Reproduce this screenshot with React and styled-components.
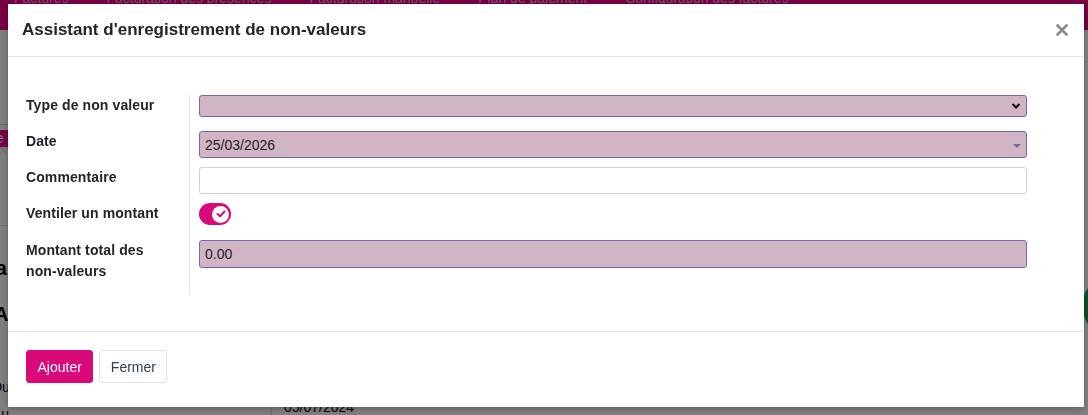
import React from "react";
import styled, { createGlobalStyle } from "styled-components";

const GlobalStyle = createGlobalStyle`
    html, body {
        margin: 0;
        padding: 0;
        overflow: hidden;
    }
    body {
        font-family: "Liberation Sans", Arial, sans-serif;
        color: #222;
    }
`;

//page behind the dialog
const Page = styled.div`
    width: 100vw;
    height: 100vh;
    overflow: hidden;
    background: #ffffff;
    display: flex;
    flex-direction: column;
`;

const Navbar = styled.div`
    height: 30px;
    flex-shrink: 0;
    background: #f0008a;
    display: flex;
    align-items: flex-start;
    gap: 38px;
    padding-left: 14px;
    overflow: hidden;
`;

const NavItem = styled.span`
    font-size: 14px;
    line-height: 14px;
    margin-top: -9px;
    color: rgba(255, 255, 255, 0.62);
    white-space: nowrap;
`;

const Content = styled.div`
    flex: 1;
    display: flex;
`;

const LeftPane = styled.div`
    width: 271px;
    border-right: 1px solid #d0d0d0;
    display: flex;
    flex-direction: column;
    overflow: hidden;
`;

const ControlBar = styled.div`
    height: 94px;
    border-bottom: 1px solid #c8c8c8;
`;

const PinkChip = styled.span`
    align-self: flex-start;
    margin-top: 5px;
    margin-left: -44px;
    height: 17px;
    line-height: 17px;
    padding-right: 40px;
    font-size: 14px;
    background: #f0008a;
    color: #fff;
`;

const Hatch = styled.div`
    height: 7px;
    background: repeating-linear-gradient(45deg, #e4e4e4 0 2px, #f6f6f6 2px 4px);
`;

const PaneLine = styled.div`
    margin-top: 71px;
    border-top: 1px solid #d8d8d8;
`;

const PaneHeading = styled.div`
    align-self: flex-start;
    margin-top: ${(p) => p.$top}px;
    margin-left: ${(p) => p.$shift}px;
    font-size: 20px;
    font-weight: bold;
    line-height: 20px;
    color: #000;
    white-space: nowrap;
`;

const PaneRow = styled.div`
    margin-top: ${(p) => p.$top}px;
    margin-left: -8px;
    font-size: 14px;
    line-height: 14px;
    color: #000;
`;

const RightPane = styled.div`
    flex: 1;
    padding: 369px 0 0 12px;
    font-size: 14px;
    color: #000;
`;

const ChatBubble = styled.div`
    position: fixed;
    right: -54px;
    top: 276px;
    width: 60px;
    height: 60px;
    border-radius: 50%;
    background: #1c9e40;
`;

const Backdrop = styled.div`
    position: fixed;
    inset: 0;
    background: rgba(0, 0, 0, 0.5);
`;

//dialog
const Modal = styled.div`
    position: fixed;
    left: 8px;
    top: 4px;
    width: 1076px;
    background: #ffffff;
    display: flex;
    flex-direction: column;
    box-shadow: 0 2px 6px rgba(0, 0, 0, 0.25);
`;

const Header = styled.div`
    height: 52px;
    padding: 0 16px 0 14px;
    display: flex;
    align-items: center;
    justify-content: space-between;
    border-bottom: 1px solid #dee2e6;
`;

const Title = styled.h4`
    margin: 0;
    font-size: 17px;
    font-weight: bold;
    color: #212529;
`;

const CloseBtn = styled.button`
    border: none;
    background: transparent;
    padding: 0;
    width: 12px;
    height: 12px;
    display: flex;
    cursor: pointer;
`;

const Body = styled.div`
    padding: 38px 57px 38px 18px;
    border-bottom: 1px solid #dee2e6;
`;

const FormGrid = styled.div`
    display: grid;
    grid-template-columns: 164px 1fr;
`;

const Label = styled.label`
    height: ${(p) => p.$h}px;
    border-right: 1px solid #dee2e6;
    font-size: 14px;
    font-weight: bold;
    line-height: 21px;
    letter-spacing: 0.1px;
    color: #212529;
`;

const Field = styled.div`
    height: ${(p) => p.$h}px;
    padding-left: 9px;
`;

const Input = styled.div`
    position: relative;
    box-sizing: border-box;
    height: ${(p) => p.$h}px;
    padding: 0 5px;
    display: flex;
    align-items: center;
    font-size: 14px;
    color: #222;
    border-radius: 3px;
    border: 1px solid ${(p) => (p.$required ? "#7966a8" : "#d0d0d0")};
    background: ${(p) => (p.$required ? "#d1b5c5" : "#ffffff")};
`;

const Chevron = styled.svg`
    position: absolute;
    right: 5px;
    top: 50%;
    margin-top: -4px;
`;

const Caret = styled.span`
    position: absolute;
    right: 5px;
    top: 12px;
    border-left: 4px solid transparent;
    border-right: 4px solid transparent;
    border-top: 4px solid #7966a8;
`;

const Switch = styled.div`
    width: 32px;
    height: 22px;
    border-radius: 11px;
    background: #d9097a;
    display: flex;
    align-items: center;
    justify-content: flex-end;
    padding-right: 2px;
    box-sizing: border-box;
`;

const Knob = styled.span`
    width: 17px;
    height: 17px;
    border-radius: 50%;
    background: #ffffff;
    display: flex;
    align-items: center;
    justify-content: center;
`;

const Footer = styled.div`
    height: 75px;
    padding: 18px 18px 0;
    box-sizing: border-box;
    display: flex;
    align-items: flex-start;
    gap: 6px;
`;

const Button = styled.button`
    height: 33px;
    padding: 0 10.5px;
    font-family: "Liberation Sans", Arial, sans-serif;
    font-size: 14px;
    border-radius: 3px;
    cursor: pointer;
    border: 1px solid ${(p) => (p.$primary ? "#d9097a" : "#dee2e6")};
    background: ${(p) => (p.$primary ? "#d9097a" : "#ffffff")};
    color: ${(p) => (p.$primary ? "#ffffff" : "#2c3e50")};
`;

const menu = [
    "Factures",
    "Facturation des présences",
    "Facturation manuelle",
    "Plan de paiement",
    "Configuration des factures",
];

function App() {
    return (
        <>
            <GlobalStyle />
            <Page>
                <Navbar>
                    {menu.map((m) => (
                        <NavItem key={m}>{m}</NavItem>
                    ))}
                </Navbar>
                <Content>
                    <LeftPane>
                        <ControlBar />
                        <PinkChip>Facture</PinkChip>
                        <Hatch />
                        <PaneLine />
                        <PaneHeading $top={32} $shift={-52}>Échéa</PaneHeading>
                        <PaneHeading $top={26} $shift={-6}>A</PaneHeading>
                        <PaneRow $top={56}>Du</PaneRow>
                        <PaneRow $top={13}>Au</PaneRow>
                    </LeftPane>
                    <RightPane>05/07/2024</RightPane>
                </Content>
                <ChatBubble />
            </Page>
            <Backdrop />
            <Modal>
                <Header>
                    <Title>Assistant d'enregistrement de non-valeurs</Title>
                    <CloseBtn aria-label="Fermer">
                        <svg width="12" height="12" viewBox="0 0 12 12">
                            <path d="M1.5 1.5 L10.5 10.5 M10.5 1.5 L1.5 10.5" stroke="#8a8a8a" strokeWidth="2.6" strokeLinecap="round" />
                        </svg>
                    </CloseBtn>
                </Header>
                <Body>
                    <FormGrid>
                        <Label $h={36}>Type de non valeur</Label>
                        <Field $h={36}>
                            <Input $h={22} $required>
                                <Chevron width="10" height="8" viewBox="0 0 10 8">
                                    <path d="M1.5 2 L5 5.5 L8.5 2" fill="none" stroke="#111" strokeWidth="2" />
                                </Chevron>
                            </Input>
                        </Field>

                        <Label $h={36}>Date</Label>
                        <Field $h={36}>
                            <Input $h={27} $required>
                                25/03/2026
                                <Caret />
                            </Input>
                        </Field>

                        <Label $h={36}>Commentaire</Label>
                        <Field $h={36}>
                            <Input $h={27} />
                        </Field>

                        <Label $h={37}>Ventiler un montant</Label>
                        <Field $h={37}>
                            <Switch>
                                <Knob>
                                    <svg width="10" height="8" viewBox="0 0 10 8">
                                        <path d="M1.5 4 L4 6.3 L8.5 1.5" fill="none" stroke="#d9097a" strokeWidth="2" strokeLinecap="round" strokeLinejoin="round" />
                                    </svg>
                                </Knob>
                            </Switch>
                        </Field>

                        <Label $h={53}>
                            Montant total des
                            <br />
                            non-valeurs
                        </Label>
                        <Field $h={53}>
                            <Input $h={28} $required>0.00</Input>
                        </Field>
                    </FormGrid>
                </Body>
                <Footer>
                    <Button $primary>Ajouter</Button>
                    <Button>Fermer</Button>
                </Footer>
            </Modal>
        </>
    );
}

export default App;
